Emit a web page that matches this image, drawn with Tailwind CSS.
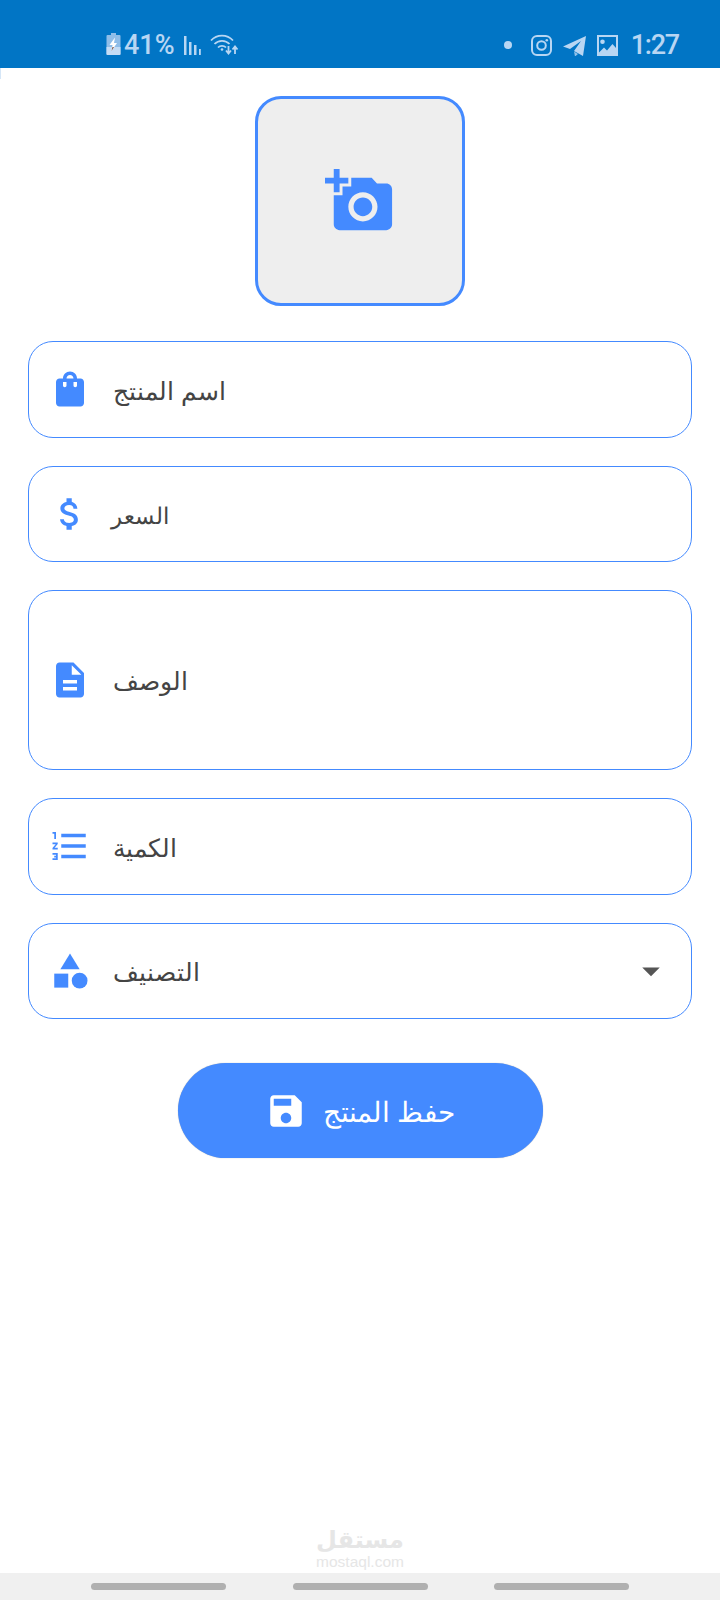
<!DOCTYPE html>
<html lang="ar">
<head>
<meta charset="utf-8">
<script src="https://cdn.jsdelivr.net/npm/@tailwindcss/browser@4"></script>
<title>إضافة منتج</title>
</head>
<body class="bg-white">
<div class="relative w-[720px] h-[1600px] flex flex-col overflow-hidden font-['Noto_Sans','DejaVu_Sans',sans-serif]">

  <!-- status bar -->
  <header class="h-[68px] shrink-0 bg-[#0175c5] flex items-start justify-between pt-[33px] pl-[106px] pr-[41px] text-[#b8d6f3] font-['Roboto',sans-serif]">
    <div class="flex items-start">
      <svg class="w-[15px] h-[22px]" viewBox="0 0 15 22"><path fill="#8fbde8" d="M5 0h5v2h3.500a1 1 0 0 1 1 1v18a1 1 0 0 1-1 1H1.500a1 1 0 0 1-1-1V3a1 1 0 0 1 1-1H5z"/><path fill="#c4dcf5" d="M.5 14h14v7a1 1 0 0 1-1 1H1.500a1 1 0 0 1-1-1z"/><path fill="#fff" d="M9 4.500 3.500 12h3L5.500 18 11 10H8z"/><path fill="#7a4a3a" d="M6.500 14 5.500 18 8 14z"/></svg>
      <span class="ml-[3px] text-[27px] leading-[24px] font-medium">41%</span>
      <svg class="ml-[9px] mt-[3px] w-[19px] h-[19px]" viewBox="0 0 19 19" fill="currentColor"><rect x="0" y="0" width="2.500" height="19"/><rect x="5" y="6" width="2.500" height="13"/><rect x="10" y="9" width="2.500" height="10"/><rect x="15" y="13" width="1.800" height="6"/></svg>
      <svg class="ml-[7px] w-[29px] h-[22px]" viewBox="0 0 29 22" fill="none" stroke="currentColor" stroke-width="1.800"><path d="M1 7.500C7 1 17 1 23 7.500"/><path d="M4.500 11c4-4.300 11-4.300 15 0"/><path d="M8 14.500c2.200-2.300 5.800-2.300 8 0"/><circle cx="12" cy="16.500" r="1.300" fill="currentColor" stroke="none"/><path d="M18.500 13v7M16 17.500l2.500 3 2.500-3M25 21v-7M22.500 16.500l2.500-3 2.500 3"/></svg>
    </div>
    <div class="flex items-start">
      <span class="mt-[8px] w-[8px] h-[8px] rounded-full bg-current"></span>
      <svg class="ml-[19px] mt-[2px] w-[21px] h-[21px]" viewBox="0 0 21 21" fill="none" stroke="currentColor" stroke-width="2"><rect x="1" y="1" width="19" height="19" rx="5"/><circle cx="10.500" cy="10.500" r="4.300"/><circle cx="15.800" cy="5.200" r="1.300" fill="currentColor" stroke="none"/></svg>
      <svg class="ml-[11px] mt-[3px] w-[23px] h-[20px]" viewBox="0 0 23 20" fill="currentColor"><path d="M23 0 20 20 11 15 18 5 7 13 0 10.500z"/><path d="M11 15.500 15 18 12 20.500z" opacity=".8"/></svg>
      <svg class="ml-[11px] mt-[2px] w-[21px] h-[21px]" viewBox="0 0 21 21"><path fill="currentColor" fill-rule="evenodd" d="M0 0h21v21H0zM5.500 4.500a2.300 2.300 0 1 0 0 4.600 2.300 2.300 0 0 0 0-4.600zM2 17.500l5-5 3 3 5.500-6.500L19 13V2H2z"/></svg>
      <span class="ml-[13px] text-[27px] leading-[24px] font-medium tracking-[-1.200px]">1:27</span>
    </div>
  </header>
  <span class="absolute left-0 top-[68px] w-px h-[11px] bg-[#d5e6f7]"></span>

  <!-- form -->
  <main class="flex-1 flex flex-col items-center pt-[28px]">
    <button class="w-[210px] h-[210px] rounded-[26px] border-[3px] border-[#448aff] bg-[#eeeeee] flex items-center justify-center">
      <svg class="w-[70px] h-[70px] fill-[#448aff]" viewBox="0 0 24 24"><path d="M3 4V1h2v3h3v2H5v3H3V6H0V4h3zm3 6V7h3V4h7l1.830 2H21c1.100 0 2 .9 2 2v12c0 1.100-.9 2-2 2H5c-1.100 0-2-.9-2-2V10h3zm7 9c2.760 0 5-2.240 5-5s-2.240-5-5-5-5 2.240-5 5 2.240 5 5 5zm-3.200-5c0 1.770 1.430 3.200 3.200 3.200s3.200-1.430 3.200-3.200-1.430-3.200-3.200-3.200-3.200 1.430-3.200 3.200z"/></svg>
    </button>

    <div class="mt-[35px] w-[664px] flex flex-col gap-[28px] text-[25px] font-light text-[#444444]">
      <div class="h-[96.500px] rounded-[25px] border border-[#448aff] flex items-center pl-[20px] gap-[22px]">
        <svg class="w-[42px] h-[42px] fill-[#448aff]" viewBox="0 0 24 24"><path d="M18 6h-2c0-2.210-1.790-4-4-4S8 3.790 8 6H6c-1.100 0-2 .9-2 2v12c0 1.100.9 2 2 2h12c1.100 0 2-.9 2-2V8c0-1.100-.9-2-2-2zm-8 4c0 .55-.45 1-1 1s-1-.45-1-1V8h2v2zm2-6c1.100 0 2 .9 2 2h-4c0-1.100.9-2 2-2zm4 6c0 .55-.45 1-1 1s-1-.45-1-1V8h2v2z"/></svg>
        <span class="pt-[2px]">اسم المنتج</span>
      </div>
      <div class="h-[96.500px] rounded-[25px] border border-[#448aff] flex items-center pl-[20px] gap-[22px]">
        <svg class="w-[42px] h-[42px] fill-[#448aff]" viewBox="0 0 24 24"><path d="M11.800 10.900c-2.270-.59-3-1.200-3-2.150 0-1.090 1.010-1.850 2.700-1.850 1.780 0 2.440.85 2.500 2.100h2.210c-.07-1.720-1.120-3.180-3.210-3.970V3h-3v2.160c-1.940.42-3.500 1.680-3.500 3.610 0 2.310 1.910 3.460 4.700 4.130 2.500.6 3 1.480 3 2.410 0 .69-.49 1.790-2.700 1.790-2.060 0-2.870-.92-2.980-2.100h-2.200c.12 2.190 1.760 3.420 3.680 3.830V21h3v-2.150c1.950-.37 3.500-1.500 3.500-3.550 0-2.840-2.430-3.810-4.700-4.400z"/></svg>
        <span class="pt-[2px] -ml-[2px] text-[23px]">السعر</span>
      </div>
      <div class="h-[180px] rounded-[25px] border border-[#448aff] flex items-center pl-[20px] gap-[22px]">
        <svg class="w-[42px] h-[42px] fill-[#448aff]" viewBox="0 0 24 24"><path d="M14 2H6c-1.100 0-1.990.9-1.990 2L4 20c0 1.100.89 2 1.990 2H18c1.100 0 2-.9 2-2V8l-6-6zm2 16H8v-2h8v2zm0-4H8v-2h8v2zm-3-5V3.500L18.500 9H13z"/></svg>
        <span class="pt-[2px]">الوصف</span>
      </div>
      <div class="h-[96.500px] rounded-[25px] border border-[#448aff] flex items-center pl-[20px] gap-[22px]">
        <svg class="w-[42px] h-[42px] fill-[#448aff]" viewBox="0 0 24 24"><path d="M2 17h2v.5H3v1h1v.5H2v1h3v-4H2v1zm1-9h1V4H2v1h1v3zm-1 3h1.800L2 13.100v.9h3v-1H3.200L5 10.900V10H2v1zm5-6v2h14V5H7zm0 14h14v-2H7v2zm0-6h14v-2H7v2z"/></svg>
        <span class="pt-[2px]">الكمية</span>
      </div>
      <div class="h-[96.500px] rounded-[25px] border border-[#448aff] flex items-center pl-[20px] pr-[19px] gap-[22px]">
        <svg class="w-[42px] h-[42px] fill-[#448aff]" viewBox="0 0 24 24"><path d="M12 2l-5.500 9h11z"/><circle cx="17.500" cy="17.500" r="4.500"/><path d="M3 13.500h8v8H3z"/></svg>
        <span class="flex-1 pt-[2px]">التصنيف</span>
        <svg class="w-[42px] h-[42px] fill-[#555555]" viewBox="0 0 24 24"><path d="M7 10l5 5 5-5z"/></svg>
      </div>
    </div>

    <button class="mt-[44px] w-[365px] h-[95px] rounded-full bg-[#448aff] shadow-[0_0_1px_rgba(0,0,0,0.35)] flex items-center justify-center gap-[16px] text-[28px] font-light text-white">
      <svg class="w-[42px] h-[42px] fill-white" viewBox="0 0 24 24"><path d="M17 3H5c-1.110 0-2 .9-2 2v14c0 1.100.89 2 2 2h14c1.100 0 2-.9 2-2V7l-4-4zm-5 16c-1.660 0-3-1.340-3-3s1.340-3 3-3 3 1.340 3 3-1.340 3-3 3zm3-10H5V5h10v4z"/></svg>
      <span>حفظ المنتج</span>
    </button>
  </main>

  <!-- watermark -->
  <div class="absolute left-[317px] top-[1526px] w-[86px] flex flex-col items-center text-[#e6e6e6]">
    <span class="text-[24px] leading-[28px] font-bold font-['DejaVu_Sans',sans-serif]">مستقل</span>
    <span class="text-[15.500px] leading-[16px] font-['Liberation_Sans',sans-serif]">mostaql.com</span>
  </div>

  <!-- nav bar -->
  <nav class="h-[27px] shrink-0 bg-[#f0f0f0] flex items-start pt-[10px] pl-[91px] gap-[66.500px]">
    <span class="w-[135px] h-[7px] rounded-full bg-[#b0b0b0]"></span>
    <span class="w-[135px] h-[7px] rounded-full bg-[#b0b0b0]"></span>
    <span class="w-[135px] h-[7px] rounded-full bg-[#b0b0b0]"></span>
  </nav>
</div>
</body>
</html>
